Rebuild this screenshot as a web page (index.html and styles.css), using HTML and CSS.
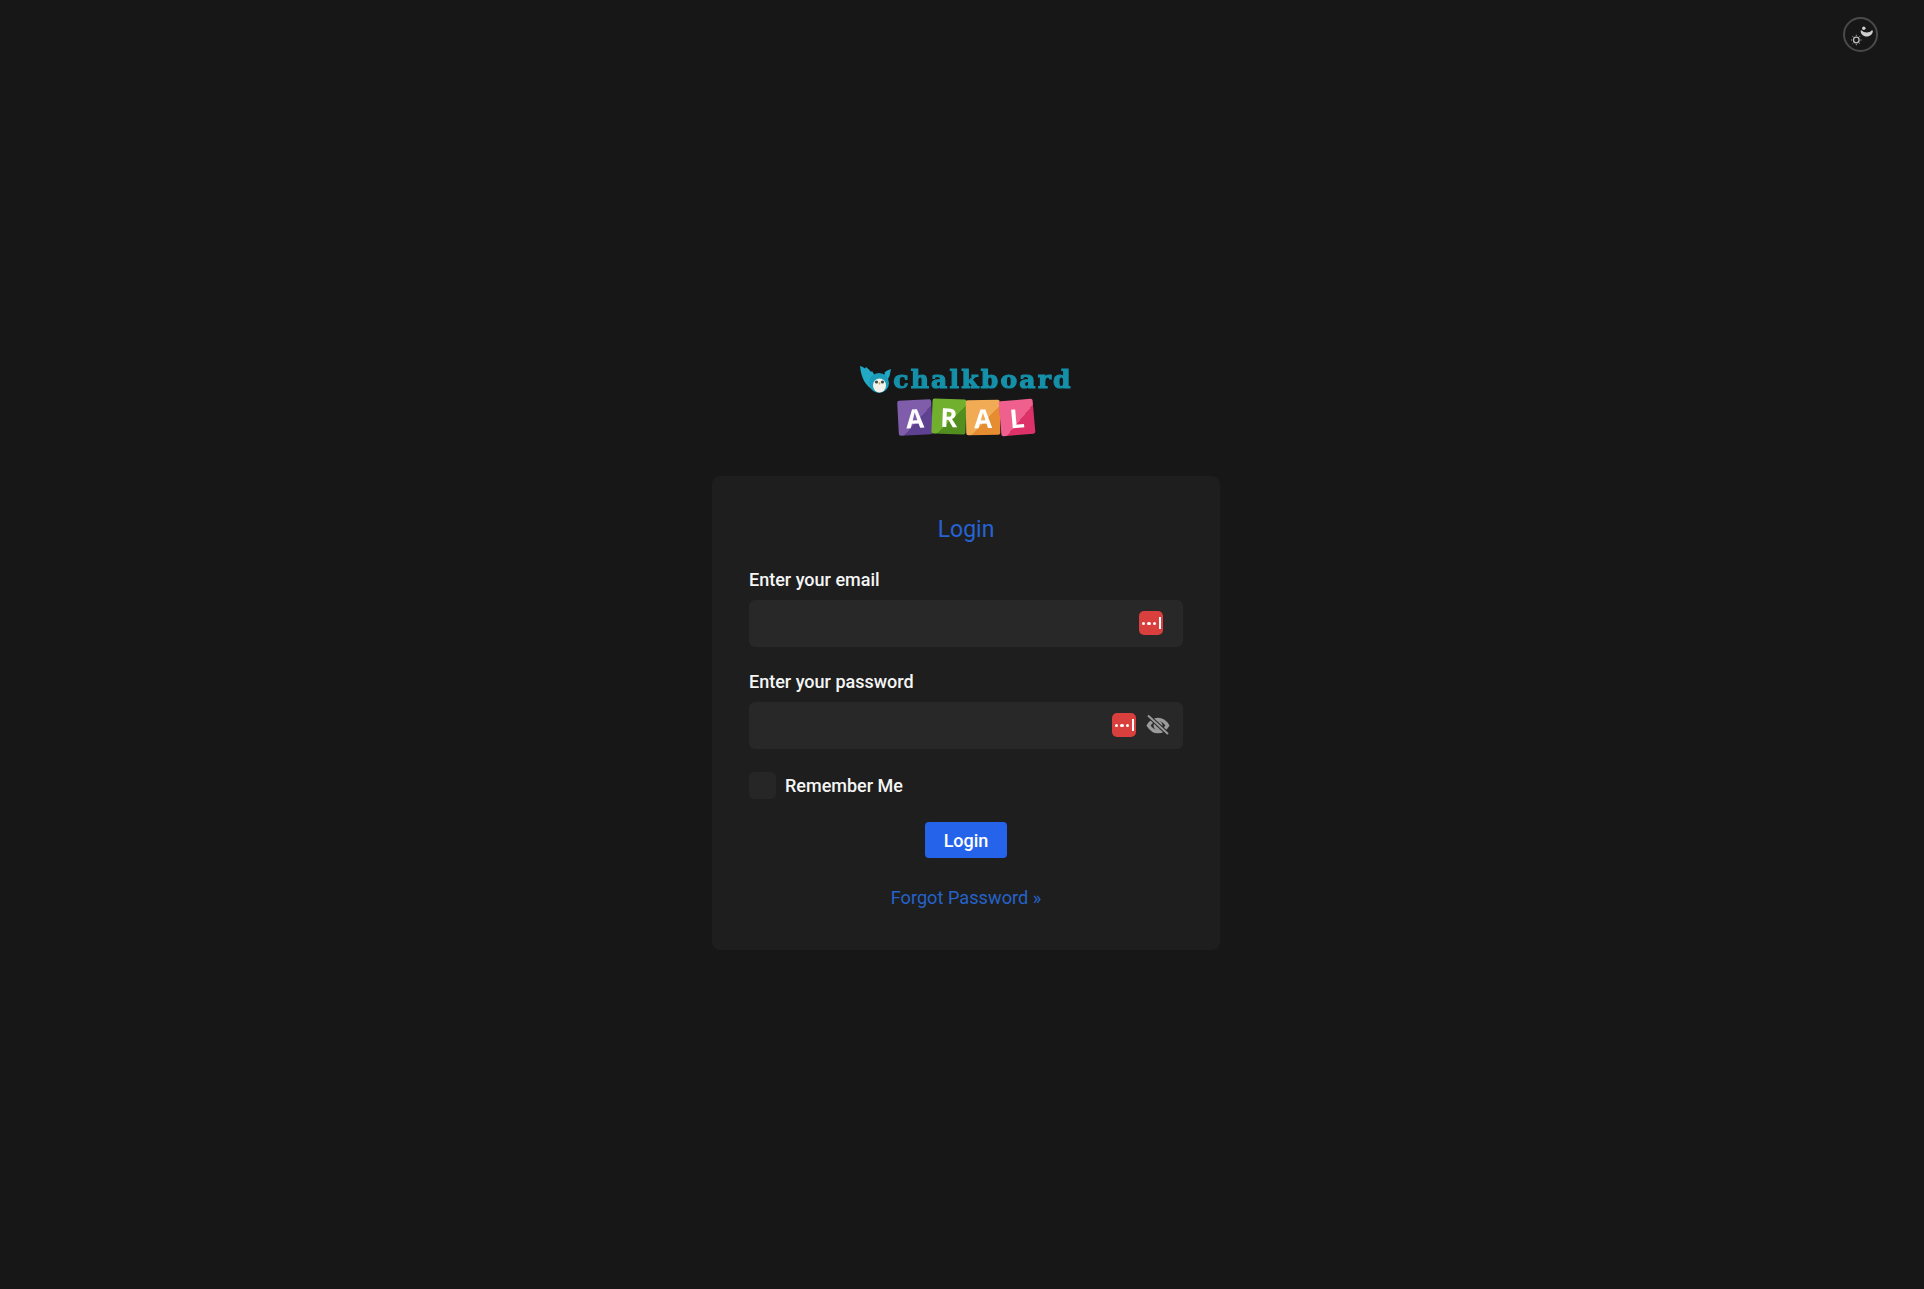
FILE: index.html
```html
<!DOCTYPE html>
<html lang="en">
<head>
    <meta charset="UTF-8">
    <meta name="viewport" content="width=device-width, initial-scale=1.0">
    <title>Login</title>
    <link rel="stylesheet" href="styles.css">
</head>
<body>
    <div class="topbar">
        <button class="theme-toggle" type="button" aria-label="Toggle theme">
            <svg width="24" height="24" viewBox="0 0 24 24" fill="none" stroke="#bdbdbd">
                <circle cx="7.300" cy="17" r="2.800" stroke-width="1.300"/>
                <path d="M7.300 11.800v1M7.300 21.200v1M2.100 17h1M11.500 17h1M3.600 13.300l.7.7M10.300 20l.7.7M3.600 20.700l.7-.7M10.300 14l.7-.7" stroke-width="1"/>
                <path d="M11.600 7.500c0 3.500 2.600 6 6.100 6s6.200-2.500 6.200-6h-1.400c-.7 1.200-2.500 1.900-4.800 1.900s-4-.7-4.700-1.900z" fill="#cfcfcf" stroke="none"/>
                <circle cx="14.800" cy="5.200" r="1.700" fill="#cfcfcf" stroke="none"/>
            </svg>
        </button>
    </div>
    <main class="login-page">
        <div class="logo">
            <div class="logo-top">
                <svg class="owl" width="32" height="28" viewBox="0 0 32 28">
                    <path d="M1 1c2 .5 3.500 1.500 5 2.500L7 2c2 1.500 3.500 3 5 5l1-1c1.500 2 2.500 4 3 6l-3 12C7 21 2 13 1 1z" fill="#22a9c6"/>
                    <path d="M32 4l-1.500 7-2.500 5-5-3c.5-2 1.500-3 3-4l-.5-1.500C27 6 29.500 5 32 4z" fill="#22a9c6"/>
                    <circle cx="20" cy="18" r="10" fill="#1b9dba"/>
                    <ellipse cx="20.500" cy="20.500" rx="6.500" ry="7" fill="#f2f2ea"/>
                    <circle cx="17.500" cy="17" r="1.600" fill="#3b4a4e"/>
                    <circle cx="23.500" cy="17" r="1.600" fill="#3b4a4e"/>
                    <path d="M19.200 17.500h2.600l-1.300 2.600z" fill="#d9a441"/>
                </svg>
                <span class="logo-word">chalkboard</span>
            </div>
            <div class="logo-tiles">
                <span class="tile tile-purple">A</span>
                <span class="tile tile-green">R</span>
                <span class="tile tile-orange">A</span>
                <span class="tile tile-pink">L</span>
            </div>
        </div>
        <form class="card">
            <h2 class="card-title">Login</h2>
            <label class="field-label">Enter your email</label>
            <div class="input-box">
                <span class="pass-icon pass-icon-end"><i></i><i></i><i></i><b></b></span>
            </div>
            <label class="field-label">Enter your password</label>
            <div class="input-box">
                <span class="pass-icon"><i></i><i></i><i></i><b></b></span>
                <svg class="eye" width="24" height="24" viewBox="0 0 24 24" fill="none" stroke="#9a9a9a">
                    <path d="M2.500 12.500C5 8.500 8.300 6.500 12 6.500s7 2 9.500 6c-2.500 4-5.800 6-9.500 6s-7-2-9.500-6z" stroke-width="3.400"/>
                    <circle cx="12" cy="12.500" r="3" stroke-width="3"/>
                    <path d="M2 2.500l20 18.500" stroke="#282828" stroke-width="4"/>
                    <path d="M2 2.500l20 18.500" stroke-width="2"/>
                </svg>
            </div>
            <div class="remember">
                <span class="checkbox"></span>
                <span>Remember Me</span>
            </div>
            <button class="login-btn" type="button">Login</button>
            <a class="forgot" href="#">Forgot Password »</a>
        </form>
    </main>
</body>
</html>
```

FILE: styles.css
```css
* {
    box-sizing: border-box;
}
body {
    margin: 0;
    height: 1289px;
    background-color: #171717;
    color: #f5f5f5;
    font-family: Roboto, "Liberation Sans", sans-serif;
    position: relative;
    overflow: hidden;
}
.topbar {
    position: absolute;
    top: 17px;
    right: 46px;
}
.theme-toggle {
    width: 35px;
    height: 35px;
    padding: 0;
    border: 2px solid #4a4a4a;
    border-radius: 50%;
    background: none;
    display: flex;
    align-items: center;
    justify-content: center;
}
.login-page {
    display: flex;
    flex-direction: column;
    align-items: center;
    padding: 362px 0 0 8px;
}
.logo {
    height: 74px;
    margin-bottom: 40px;
    display: flex;
    flex-direction: column;
    align-items: center;
    filter: blur(0.5px);
}
.logo-top {
    display: flex;
    align-items: center;
    height: 34px;
    gap: 2px;
}
.logo-word {
    font-family: "DejaVu Serif", serif;
    font-weight: 700;
    font-size: 25px;
    line-height: 34px;
    letter-spacing: 2.200px;
    color: #1590a9;
    margin-top: 2px;
    -webkit-text-stroke: 1.200px #1590a9;
}
.logo-tiles {
    display: flex;
    margin-top: 4px;
}
.tile {
    width: 34px;
    height: 35px;
    border-radius: 2px;
    display: flex;
    align-items: center;
    justify-content: center;
    font-family: "Open Sans", sans-serif;
    font-size: 26px;
    font-weight: 700;
    color: #fff;
}
.tile-purple {
    background: linear-gradient(135deg, #7f5dab 58%, #5f4192 58%);
    transform: rotate(-3deg);
}
.tile-green {
    background: linear-gradient(135deg, #71b02f 58%, #528f1e 58%);
    transform: rotate(2deg);
    margin-top: -1px;
}
.tile-orange {
    background: linear-gradient(135deg, #f2ab55 58%, #e58d30 58%);
    transform: rotate(-1deg);
}
.tile-pink {
    background: linear-gradient(135deg, #f0608f 58%, #dd3169 58%);
    transform: rotate(-5deg);
}
.card {
    width: 508px;
    height: 474px;
    padding: 38px 37px 37px;
    background-color: #1e1e1e;
    border-radius: 8px;
    display: flex;
    flex-direction: column;
    align-items: flex-start;
}
.card-title {
    width: 100%;
    margin: 0 0 22px;
    font-size: 23px;
    line-height: 32px;
    font-weight: 400;
    text-align: center;
    color: #2563d4;
}
.field-label {
    font-size: 18px;
    line-height: 24px;
    font-weight: 500;
    margin-bottom: 8px;
}
.input-box {
    width: 100%;
    height: 46.500px;
    margin-bottom: 23.500px;
    padding: 0 15px 0 0;
    background-color: #282828;
    border-radius: 6px;
    display: flex;
    align-items: center;
    justify-content: flex-end;
    gap: 10px;
}
.pass-icon {
    width: 24px;
    height: 24px;
    background-color: #d93f3c;
    border-radius: 5px;
    display: flex;
    align-items: center;
    justify-content: center;
    gap: 2px;
}
.pass-icon-end {
    margin-right: 5px;
}
.pass-icon i {
    width: 3.500px;
    height: 3.500px;
    border-radius: 50%;
    background-color: #fff;
}
.pass-icon b {
    width: 1.500px;
    height: 12px;
    margin-left: 1px;
    background-color: #fff;
}
.eye {
    margin-right: -2px;
}
.remember {
    display: flex;
    align-items: center;
    gap: 9px;
    height: 27px;
    margin-bottom: 23px;
    font-size: 18px;
    font-weight: 500;
}
.checkbox {
    width: 27px;
    height: 27px;
    background-color: #262626;
    border-radius: 5px;
}
.login-btn {
    align-self: center;
    width: 82px;
    height: 36px;
    padding: 0;
    border: none;
    border-radius: 4px;
    background-color: #2563eb;
    color: #fff;
    font-family: inherit;
    font-size: 18px;
    font-weight: 500;
}
.forgot {
    align-self: center;
    margin-top: 28px;
    font-size: 18.200px;
    line-height: 24px;
    color: #2563c9;
    text-decoration: none;
}
```
